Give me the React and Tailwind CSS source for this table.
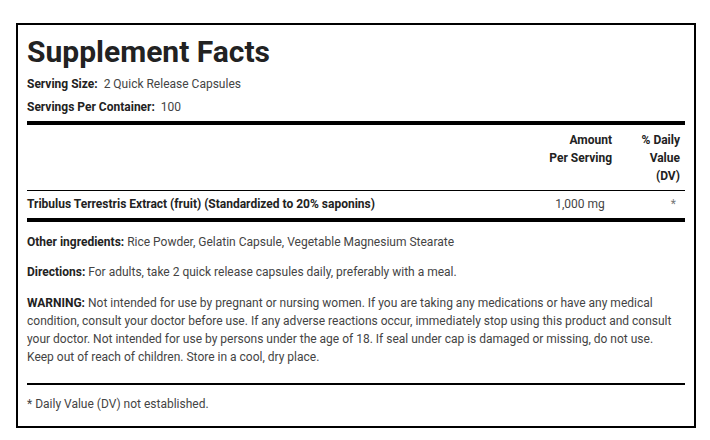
export default function App() {
  return (
    <div className="min-h-screen bg-white pl-[16px] pt-[23px] font-['Roboto',sans-serif] text-[12px] text-[#444]">
      <div className="flex h-[405px] w-[680px] flex-col border-2 border-black px-[9px] pt-[9px]">
        <h1 className="text-[30px] font-bold leading-[36px] text-[#222]">Supplement Facts</h1>
        <p className="mt-[5px] leading-[18px]">
          <span className="font-bold text-[#222]">Serving Size:</span>
          <span className="ml-[6px]">2 Quick Release Capsules</span>
        </p>
        <p className="mt-[5px] leading-[18px]">
          <span className="font-bold text-[#222]">Servings Per Container:</span>
          <span className="ml-[6px]">100</span>
        </p>

        <div className="mt-[5px] h-[4px] bg-black" />

        <div className="flex pb-[5px] pt-[6px] font-bold leading-[18px] text-[#222]">
          <div className="flex-1" />
          <div className="w-[64px] whitespace-nowrap text-right">
            Amount
            <br />
            Per Serving
          </div>
          <div className="w-[73px] whitespace-nowrap pr-[5px] text-right">
            % Daily
            <br />
            Value
            <br />
            (DV)
          </div>
        </div>

        <div className="h-px bg-black" />

        <div className="flex pb-[5px] pt-[4px] leading-[18px]">
          <div className="flex-1 font-bold text-[#222]">
            Tribulus Terrestris Extract (fruit) (Standardized to 20% saponins)
          </div>
          <div className="w-[64px] whitespace-nowrap text-center">1,000 mg</div>
          <div className="w-[73px] pr-[9px] text-right text-[#777]">*</div>
        </div>

        <div className="h-[4px] bg-black" />

        <p className="mt-[11px] leading-[18px]">
          <span className="font-bold text-[#222]">Other ingredients:</span> Rice Powder, Gelatin Capsule,
          Vegetable Magnesium Stearate
        </p>
        <p className="mt-[12px] leading-[18px]">
          <span className="font-bold text-[#222]">Directions:</span> For adults, take 2 quick release
          capsules daily, preferably with a meal.
        </p>
        <p className="mt-[13px] leading-[18px]">
          <span className="font-bold text-[#222]">WARNING:</span> Not intended for use by pregnant or
          nursing women. If you are taking any medications or have any medical
          <br />
          condition, consult your doctor before use. If any adverse reactions occur, immediately stop
          using this product and consult
          <br />
          your doctor. Not intended for use by persons under the age of 18. If seal under cap is
          damaged or missing, do not use.
          <br />
          Keep out of reach of children. Store in a cool, dry place.
        </p>

        <div className="mt-[17px] h-[2px] bg-black" />

        <p className="mt-[10px] leading-[18px]">* Daily Value (DV) not established.</p>
      </div>
    </div>
  );
}
